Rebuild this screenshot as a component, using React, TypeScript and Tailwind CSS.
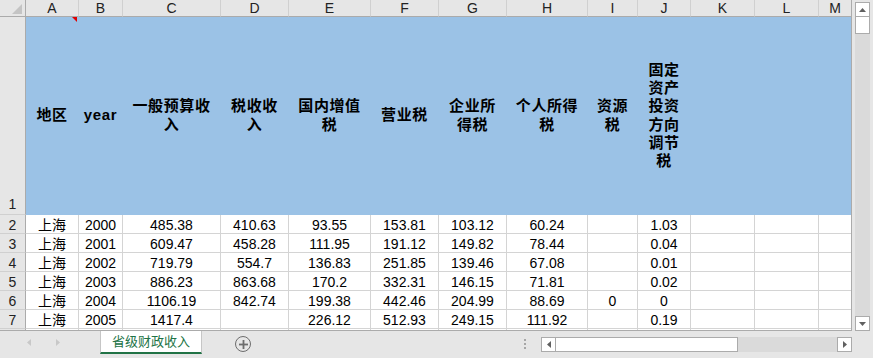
import React from "react";

const WIDTHS = [
  "w-[53px]",
  "w-[44px]",
  "w-[98px]",
  "w-[68px]",
  "w-[82px]",
  "w-[68px]",
  "w-[68px]",
  "w-[81px]",
  "w-[50px]",
  "w-[53px]",
  "w-[64px]",
  "w-[64px]",
  "w-[33px]",
];

const LETTERS = ["A", "B", "C", "D", "E", "F", "G", "H", "I", "J", "K", "L", "M"];

const HEADERS: string[][] = [
  ["地区"],
  ["year"],
  ["一般预算收", "入"],
  ["税收收", "入"],
  ["国内增值", "税"],
  ["营业税"],
  ["企业所", "得税"],
  ["个人所得", "税"],
  ["资源", "税"],
  ["固定", "资产", "投资", "方向", "调节", "税"],
  [],
  [],
  [],
];

const ROWS: string[][] = [
  ["上海", "2000", "485.38", "410.63", "93.55", "153.81", "103.12", "60.24", "", "1.03"],
  ["上海", "2001", "609.47", "458.28", "111.95", "191.12", "149.82", "78.44", "", "0.04"],
  ["上海", "2002", "719.79", "554.7", "136.83", "251.85", "139.46", "67.08", "", "0.01"],
  ["上海", "2003", "886.23", "863.68", "170.2", "332.31", "146.15", "71.81", "", "0.02"],
  ["上海", "2004", "1106.19", "842.74", "199.38", "442.46", "204.99", "88.69", "0", "0"],
  ["上海", "2005", "1417.4", "", "226.12", "512.93", "249.15", "111.92", "", "0.19"],
  ["", "", "", "", "", "", "", "", "", ""],
];

function Tri({ dir, color = "#606060" }: { dir: "up" | "down" | "left" | "right"; color?: string }) {
  const pts = {
    up: "0,4 7,4 3.5,0",
    down: "0,0 7,0 3.5,4",
    left: "4,0 4,7 0,3.5",
    right: "0,0 0,7 4,3.5",
  }[dir];
  const vertical = dir === "up" || dir === "down";
  return (
    <svg width={vertical ? 7 : 4} height={vertical ? 4 : 7} viewBox={vertical ? "0 0 7 4" : "0 0 4 7"}>
      <polygon points={pts} fill={color} />
    </svg>
  );
}

export default function App() {
  return (
    <div className="flex h-[358px] w-[873px] flex-col overflow-hidden bg-[#e6e6e6] font-['Liberation_Sans','Noto_Sans_CJK_SC',sans-serif] text-black">
      <div className="flex h-[331px]">
        {/* sheet */}
        <div className="h-[331px] w-[852px] shrink-0 overflow-hidden border-r border-b border-[#ababab] bg-white">
          {/* column letters */}
          <div className="flex h-[17px]">
            <div className="relative h-[17px] w-[26px] shrink-0 border-r border-b border-[#ababab] bg-[#e6e6e6]">
              <svg className="absolute right-[3px] bottom-[2px]" width="10" height="10" viewBox="0 0 10 10">
                <polygon points="10,0 10,10 0,10" fill="#c4c4c4" />
              </svg>
            </div>
            {LETTERS.map((l, i) => (
              <div
                key={l}
                className={`${WIDTHS[i]} flex h-[17px] shrink-0 items-center justify-center border-r border-b border-r-[#d0d0d0] border-b-[#ababab] bg-[#e6e6e6] text-[14px] leading-none text-[#222]`}
              >
                {l}
              </div>
            ))}
          </div>

          {/* row 1 */}
          <div className="flex h-[198px]">
            <div className="flex h-[198px] w-[26px] shrink-0 items-end justify-center border-r border-b border-r-[#ababab] border-b-[#d0d0d0] bg-[#e6e6e6] pb-[1px] text-[14px] leading-[17px] text-[#222]">
              1
            </div>
            {HEADERS.map((lines, i) => (
              <div
                key={i}
                className={`${WIDTHS[i]} relative flex h-[198px] shrink-0 flex-col items-center justify-center border-r border-b border-[#9bc2e6] bg-[#9bc2e6] text-center text-[15px] leading-[18.3px] font-bold tracking-[0.6px]`}
              >
                {i === 0 && (
                  <svg className="absolute top-0 right-[1px]" width="5" height="5" viewBox="0 0 5 5">
                    <polygon points="0,0 5,0 5,5" fill="#e00000" />
                  </svg>
                )}
                {lines.map((t, j) => (
                  <div key={j} className="whitespace-nowrap">
                    {t}
                  </div>
                ))}
              </div>
            ))}
          </div>

          {/* data rows */}
          {ROWS.map((row, r) => (
            <div key={r} className="flex h-[19px]">
              <div className="flex h-[19px] w-[26px] shrink-0 items-center justify-center border-r border-b border-r-[#ababab] border-b-[#d0d0d0] bg-[#e6e6e6] pt-[1px] text-[14px] leading-none text-[#222]">
                {r < 6 ? r + 2 : ""}
              </div>
              {WIDTHS.map((w, i) => (
                <div
                  key={i}
                  className={`${w} flex h-[19px] shrink-0 items-center justify-center border-r border-b border-[#d4d4d4] pt-[1px] text-[14px] leading-none whitespace-nowrap`}
                >
                  {row[i] ?? ""}
                </div>
              ))}
            </div>
          ))}
        </div>

        {/* vertical scrollbar */}
        <div className="flex h-[331px] flex-1 flex-col pt-[2px] pl-[3px]">
          <div className="flex h-[15px] w-[15px] items-center justify-center border border-[#ababab] bg-white">
            <Tri dir="up" />
          </div>
          <div className="flex w-[15px] flex-1 flex-col bg-[#dadada]">
            <div className="h-[17px] w-[15px] border-x border-b border-[#ababab] bg-white" />
          </div>
          <div className="flex h-[15px] w-[15px] items-center justify-center border border-[#ababab] bg-white">
            <Tri dir="down" />
          </div>
        </div>
      </div>

      {/* sheet tabs bar */}
      <div className="flex h-[27px] items-start">
        <div className="flex h-[23px] w-[100px] shrink-0 items-center pl-[27px]">
          <Tri dir="left" color="#c8c8c8" />
          <div className="ml-[25px]">
            <Tri dir="right" color="#c8c8c8" />
          </div>
        </div>
        <div className="flex h-[23px] w-[102px] shrink-0 items-center justify-center border-x border-b-2 border-x-[#c6c6c6] border-b-[#217346] bg-white text-[13px] leading-none text-[#217346]">
          省级财政收入
        </div>
        <div className="mt-[5px] ml-[33px] flex h-[16px] w-[16px] shrink-0 items-center justify-center rounded-full border-[1.5px] border-[#6d6d6d]">
          <svg width="9" height="9" viewBox="0 0 9 9">
            <rect x="3.6" y="0" width="1.8" height="9" fill="#6d6d6d" />
            <rect x="0" y="3.6" width="9" height="1.8" fill="#6d6d6d" />
          </svg>
        </div>
        <div className="mt-[8px] ml-[273px] flex w-[2px] shrink-0 flex-col gap-[2px]">
          <div className="h-[2px] w-[2px] bg-[#a6a6a6]" />
          <div className="h-[2px] w-[2px] bg-[#a6a6a6]" />
          <div className="h-[2px] w-[2px] bg-[#a6a6a6]" />
        </div>
        <div className="mt-[6px] ml-[15px] flex h-[15px] w-[311px] shrink-0">
          <div className="flex h-[15px] w-[15px] items-center justify-center border border-[#ababab] bg-white">
            <Tri dir="left" />
          </div>
          <div className="h-[15px] w-[182px] border-y border-r border-[#ababab] bg-white" />
          <div className="h-[15px] flex-1 bg-[#dadada]" />
          <div className="flex h-[15px] w-[15px] items-center justify-center border border-[#ababab] bg-white">
            <Tri dir="right" />
          </div>
        </div>
      </div>
    </div>
  );
}
